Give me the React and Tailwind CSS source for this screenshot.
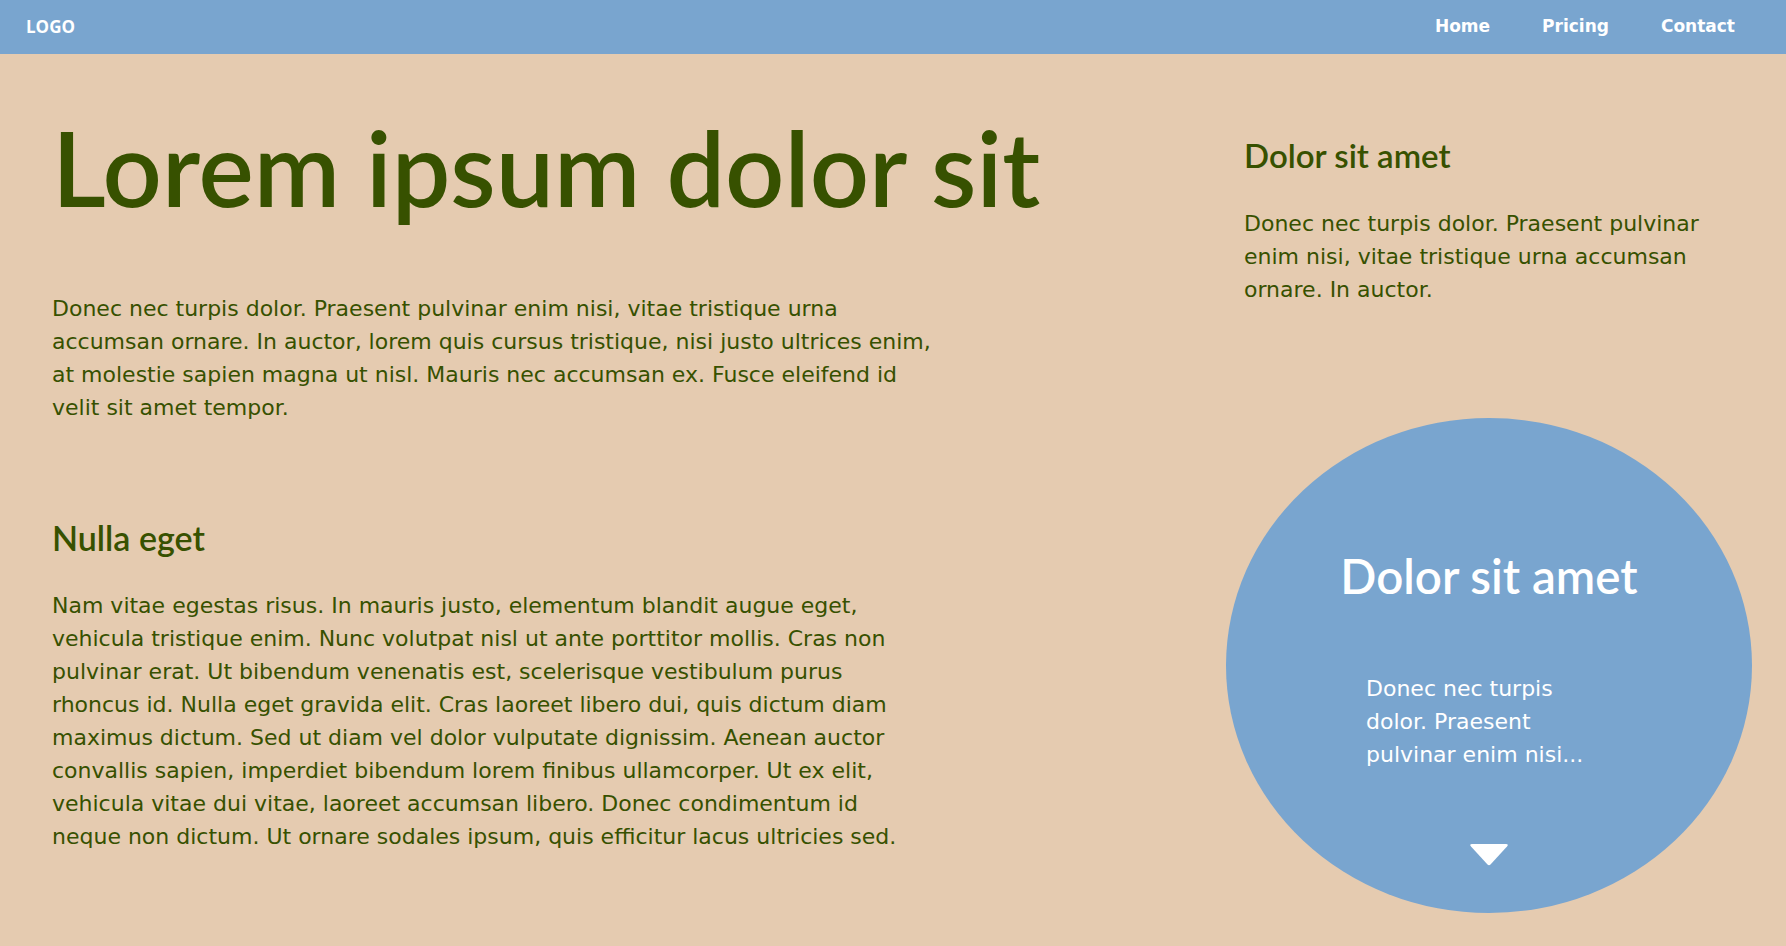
import React from "react";

export default function App() {
  return (
    <div className="min-h-[946px] w-full bg-[#e5cbb0] text-[#375100] font-['DejaVu_Sans',sans-serif]">
      <header className="flex h-[54px] items-center justify-between bg-[#79a5cf] pl-[26px] pr-[51px] text-white">
        <div className="font-['Open_Sans',sans-serif] text-[17px] font-bold">LOGO</div>
        <nav className="flex gap-[52px] text-[17px] font-bold">
          <a>Home</a>
          <a>Pricing</a>
          <a>Contact</a>
        </nav>
      </header>

      <main className="flex justify-between px-[52px]">
        <section className="w-[890px] pt-[51px]">
          <h1 className="whitespace-nowrap font-['Lato',sans-serif] text-[104px] font-semibold leading-[1.2]">
            Lorem ipsum dolor sit
          </h1>
          <p className="mt-[62px] text-[22px] leading-[33px]">
            Donec nec turpis dolor. Praesent pulvinar enim nisi, vitae tristique urna
            <br />
            accumsan ornare. In auctor, lorem quis cursus tristique, nisi justo ultrices enim,
            <br />
            at molestie sapien magna ut nisl. Mauris nec accumsan ex. Fusce eleifend id
            <br />
            velit sit amet tempor.
          </p>
          <h2 className="mt-[94px] font-['Lato',sans-serif] text-[34px] font-semibold leading-[1.2]">
            Nulla eget
          </h2>
          <p className="mt-[30px] text-[22px] leading-[33px]">
            Nam vitae egestas risus. In mauris justo, elementum blandit augue eget,
            <br />
            vehicula tristique enim. Nunc volutpat nisl ut ante porttitor mollis. Cras non
            <br />
            pulvinar erat. Ut bibendum venenatis est, scelerisque vestibulum purus
            <br />
            rhoncus id. Nulla eget gravida elit. Cras laoreet libero dui, quis dictum diam
            <br />
            maximus dictum. Sed ut diam vel dolor vulputate dignissim. Aenean auctor
            <br />
            convallis sapien, imperdiet bibendum lorem finibus ullamcorper. Ut ex elit,
            <br />
            vehicula vitae dui vitae, laoreet accumsan libero. Donec condimentum id
            <br />
            neque non dictum. Ut ornare sodales ipsum, quis efficitur lacus ultricies sed.
          </p>
        </section>

        <aside className="flex w-[490px] flex-col items-center pt-[82px]">
          <div className="w-full">
            <h3 className="font-['Lato',sans-serif] text-[33px] font-semibold leading-[1.2]">
              Dolor sit amet
            </h3>
            <p className="mt-[31px] text-[22px] leading-[33px]">
              Donec nec turpis dolor. Praesent pulvinar
              <br />
              enim nisi, vitae tristique urna accumsan
              <br />
              ornare. In auctor.
            </p>
          </div>

          <div className="mt-[112px] flex h-[495px] w-[526px] shrink-0 flex-col items-center rounded-[50%] bg-[#79a5cf] pt-[129px] text-white">
            <h3 className="font-['Lato',sans-serif] text-[47.5px] font-semibold leading-[1.2]">
              Dolor sit amet
            </h3>
            <p className="mt-[68px] w-[246px] text-[22px] leading-[33px]">
              Donec nec turpis
              <br />
              dolor. Praesent
              <br />
              pulvinar enim nisi...
            </p>
            <svg className="mt-[72px]" width="42" height="24" viewBox="0 0 42 24">
              <path
                d="M4 1 H38 Q41 1 39 3.5 L22.5 21.5 Q21 23 19.5 21.5 L3 3.5 Q1 1 4 1 Z"
                fill="white"
              />
            </svg>
          </div>
        </aside>
      </main>
    </div>
  );
}
